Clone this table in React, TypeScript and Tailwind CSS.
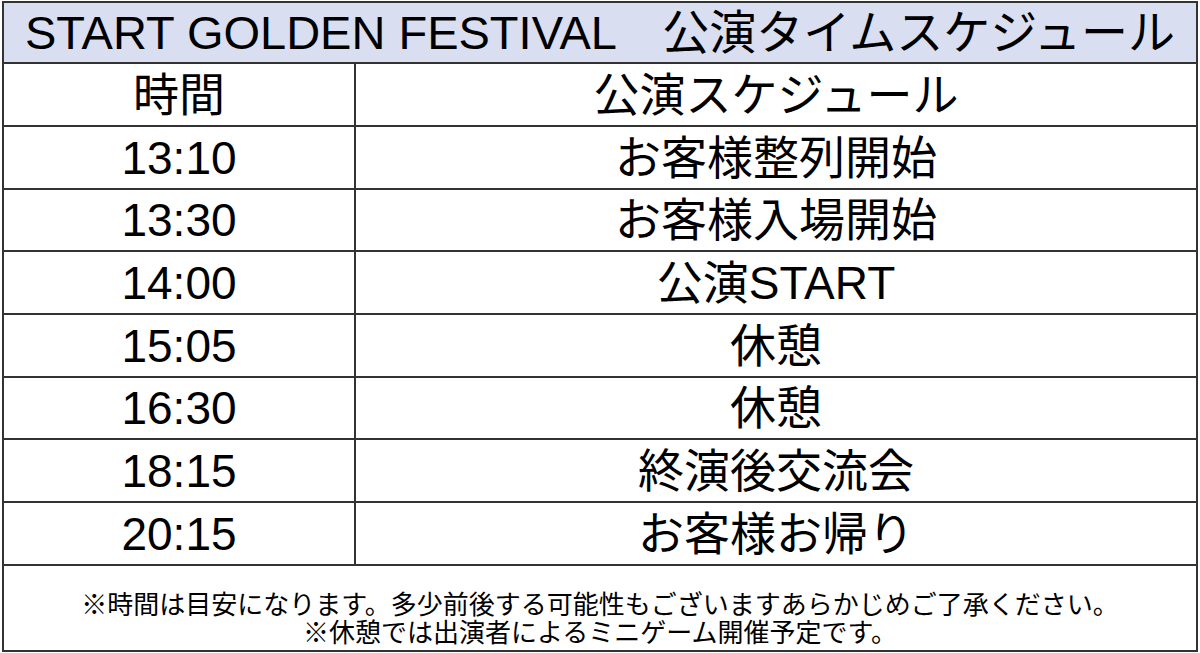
import React from 'react';

const rows: { time: string; item: string; h: string }[] = [
  { time: '13:10', item: 'お客様整列開始', h: 'h-[63px]' },
  { time: '13:30', item: 'お客様入場開始', h: 'h-[62px]' },
  { time: '14:00', item: '公演START', h: 'h-[63px]' },
  { time: '15:05', item: '休憩', h: 'h-[63px]' },
  { time: '16:30', item: '休憩', h: 'h-[62px]' },
  { time: '18:15', item: '終演後交流会', h: 'h-[63px]' },
  { time: '20:15', item: 'お客様お帰り', h: 'h-[63px]' },
];

function Row({ left, right, h }: { left: string; right: string; h: string }) {
  return (
    <div className={`flex ${h} border-b-2 border-[#333]`}>
      <div className="w-[352px] shrink-0 border-r-2 border-[#333] flex items-center justify-center">
        {left}
      </div>
      <div className="flex-1 flex items-center justify-center">{right}</div>
    </div>
  );
}

export default function App() {
  return (
    <div
      className="w-[1200px] h-[653px] bg-white pt-[1px] pl-[2px] text-black overflow-hidden"
      style={{ fontFamily: '"Liberation Sans", "Noto Sans CJK JP", sans-serif' }}
    >
      <div className="w-[1196px] h-[651px] border-2 border-[#333] flex flex-col">
        {/* Title */}
        <div className="h-[61px] shrink-0 bg-[#d9def0] border-b-2 border-[#333] flex items-center justify-center text-[47px] leading-none whitespace-pre">
          START GOLDEN FESTIVAL　公演タイムスケジュール
        </div>

        <div className="text-[46px] leading-none">
          <Row left="時間" right="公演スケジュール" h="h-[63px]" />
          {rows.map((r, i) => (
            <Row key={i} left={r.time} right={r.item} h={r.h} />
          ))}
        </div>

        {/* Notes */}
        <div className="flex-1 flex flex-col items-center justify-end pb-[3px] text-[26px] leading-[28px]">
          <p>※時間は目安になります。多少前後する可能性もございますあらかじめご了承ください。</p>
          <p>※休憩では出演者によるミニゲーム開催予定です。</p>
        </div>
      </div>
    </div>
  );
}
